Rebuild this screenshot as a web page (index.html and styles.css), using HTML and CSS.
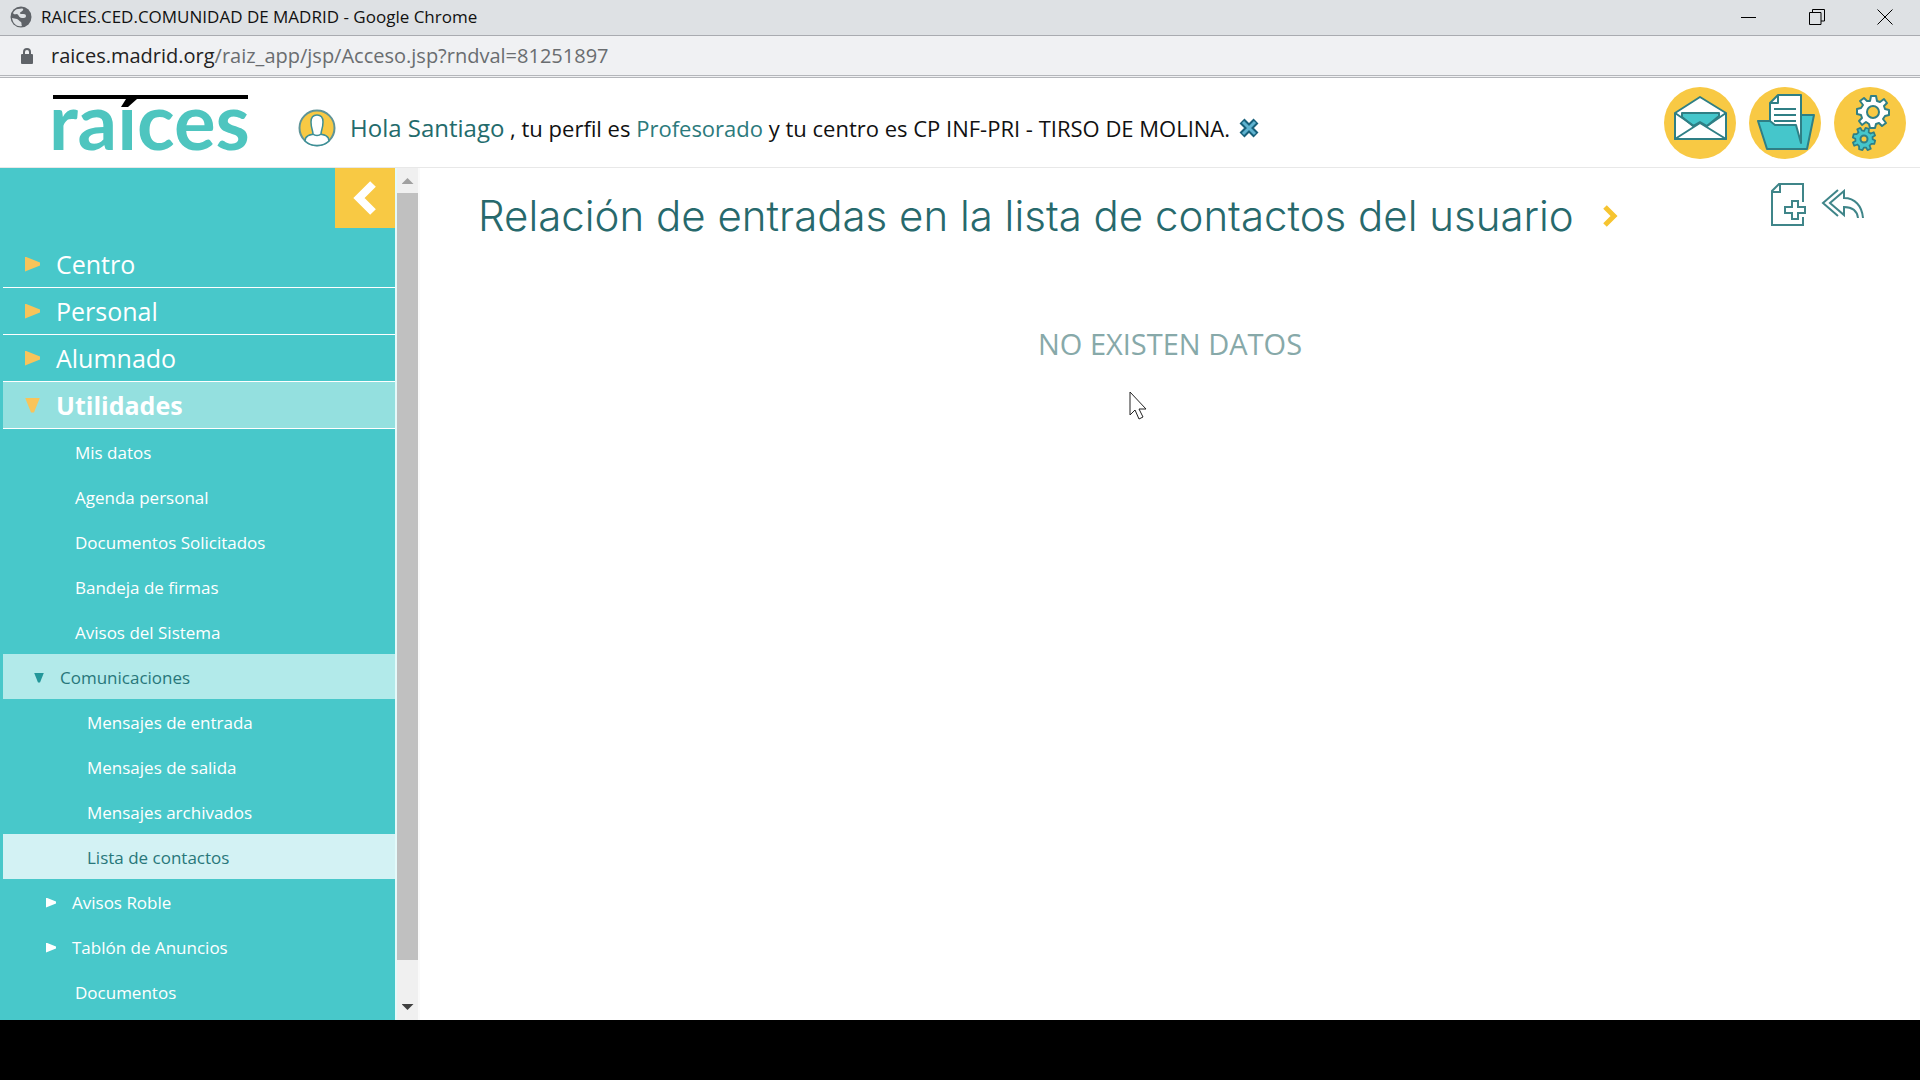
FILE: index.html
```html
<!DOCTYPE html>
<html lang="es">
<head>
    <meta charset="UTF-8">
    <meta name="viewport" content="width=device-width, initial-scale=1.0">
    <title>RAICES.CED.COMUNIDAD DE MADRID</title>
    <link rel="stylesheet" href="styles.css">
</head>
<body>
    <div class="titlebar">
        <svg class="globe" width="22" height="22" viewBox="0 0 22 22">
            <circle cx="11" cy="11" r="10.5" fill="#5f6368"/>
            <path d="M3 7c1-2 3-4 5-4 2 0 4-1 5 0 1 1-1 2-2 3-2 1-1 2 1 2 2 0 4 0 4 2s-2 2-4 2c-3 0-3-3-5-4-2 0-3 1-4-1zM2 12l5 1c2 1 2 2 4 3 1 1 0 3 1 4-5 1-9-2-10-8z" fill="#dee1e4"/>
        </svg>
        <span class="window-title">RAICES.CED.COMUNIDAD DE MADRID - Google Chrome</span>
        <div class="window-buttons">
            <button aria-label="Minimizar"><svg width="16" height="16" viewBox="0 0 16 16"><path d="M0 8.500h15"/></svg></button>
            <button aria-label="Restaurar"><svg width="16" height="16" viewBox="0 0 16 16"><path d="M.5 3.500h11.500v12h-11.500zM3.500 3.500v-3h12v11.500h-3.500"/></svg></button>
            <button aria-label="Cerrar"><svg width="16" height="16" viewBox="0 0 16 16"><path d="M.5 .5l15 15M15.500 .5l-15 15"/></svg></button>
        </div>
    </div>

    <div class="addressbar">
        <svg width="12" height="16" viewBox="0 0 12 16">
            <path d="M3 7V4a3 3 0 0 1 6 0v3" fill="none" stroke="#5f6368" stroke-width="2"/>
            <rect x="0" y="6" width="12" height="10" rx="1" fill="#5f6368"/>
        </svg>
        <span class="url"><b>raices.madrid.org</b>/raiz_app/jsp/Acceso.jsp?rndval=81251897</span>
    </div>

    <header class="header">
        <div class="logo">
            <span class="logo-text">raıces</span>
            <svg class="accent" width="16" height="8" viewBox="0 0 16 8"><path d="M5 0h11L7 8H0z"/></svg>
        </div>
        <div class="profile">
            <svg class="user" width="38" height="38" viewBox="0 0 38 38">
                <circle cx="19" cy="19" r="17.500" fill="#f8c944" stroke="#5f9497" stroke-width="2"/>
                <path d="M7 32c0-5 5-7 12-7s12 2 12 7c-3 3-7 4.500-12 4.500S10 35 7 32z" fill="#fff" stroke="#3d8f96" stroke-width="1.500"/>
                <path d="M15 25c0-3-2-6-2-12 0-5 2-7 6-7s6 2 6 7c0 6-2 9-2 12-2 2-6 2-8 0z" fill="#fff" stroke="#3d8f96" stroke-width="1.500"/>
            </svg>
            <p class="greeting"><span class="hello">Hola Santiago</span> , tu perfil es <a href="#">Profesorado</a> y tu centro es CP INF-PRI - TIRSO DE MOLINA.</p>
            <button class="exit" aria-label="Salir">
                <svg width="22" height="22" viewBox="0 0 22 22"><path d="M4 4l14 14M18 4L4 18" stroke="#17607a" stroke-width="7"/><path d="M5 5l12 12M17 5L5 17" stroke="#5fb3d0" stroke-width="3"/></svg>
            </button>
        </div>
        <nav class="shortcuts">
            <a href="#" aria-label="Mensajes">
                <svg width="72" height="72" viewBox="0 0 72 72">
                    <circle cx="36" cy="36" r="36" fill="#f8c944"/>
                    <g stroke="#2f7f85" stroke-width="2" stroke-linejoin="round">
                        <path d="M11 26L36 10l26 16v26H11z" fill="#fff"/>
                        <path d="M18 26h37v3L43 39l-7-4-7 4-11-9z" fill="#45c6cb"/>
                        <path d="M11 52l25-16 26 16z" fill="#fff"/>
                        <path d="M11 26l19 13M62 26L43 39" fill="none"/>
                    </g>
                </svg>
            </a>
            <a href="#" aria-label="Documentos">
                <svg width="72" height="72" viewBox="0 0 72 72">
                    <circle cx="36" cy="36" r="36" fill="#f8c944"/>
                    <g stroke="#2f7f85" stroke-width="2" stroke-linejoin="round">
                        <path d="M52 28h13l-7 34H18L9 34h13z" fill="#45c6cb"/>
                        <path d="M29 8h23v48l-5-18H26l-5-4V16z" fill="#fff"/>
                        <path d="M29 8v8h-8M25 22h22M25 28h22M25 34h22" fill="none"/>
                    </g>
                </svg>
            </a>
            <a href="#" aria-label="Configuración">
                <svg width="72" height="72" viewBox="0 0 72 72">
                    <circle cx="36" cy="36" r="36" fill="#f8c944"/>
                    <path transform="translate(39 25)" d="M-3-11L-2-16H3L4-11 7-10 11-13 14-9 11-6 12-3 16-2V3L12 4 10 7 13 11 9 14 6 11 3 12 2 16H-3L-4 12-7 10-11 13-14 9-11 6-12 3-16 2V-3L-12-4-10-7-13-11-9-14-6-11z" fill="#fff" stroke="#2f7f85" stroke-width="2" stroke-linejoin="round"/>
                    <circle cx="39" cy="25" r="6" fill="#f8c944" stroke="#2f7f85" stroke-width="2"/>
                    <path transform="translate(30 52) rotate(15) scale(.7)" d="M-3-11L-2-16H3L4-11 7-10 11-13 14-9 11-6 12-3 16-2V3L12 4 10 7 13 11 9 14 6 11 3 12 2 16H-3L-4 12-7 10-11 13-14 9-11 6-12 3-16 2V-3L-12-4-10-7-13-11-9-14-6-11z" fill="#45c6cb" stroke="#2f7f85" stroke-width="2.500" stroke-linejoin="round"/>
                    <circle cx="30" cy="52" r="3.500" fill="#f8c944" stroke="#2f7f85" stroke-width="2"/>
                </svg>
            </a>
        </nav>
    </header>

    <div class="main">
        <aside class="sidebar">
            <button class="collapse" aria-label="Ocultar menú">
                <svg width="24" height="36" viewBox="0 0 24 36"><path d="M20 4L6 18l14 14" fill="none" stroke="#fff" stroke-width="8"/></svg>
            </button>
            <ul class="menu">
                <li><a href="#" class="top"><i class="arrow right"></i>Centro</a></li>
                <li><a href="#" class="top"><i class="arrow right"></i>Personal</a></li>
                <li><a href="#" class="top"><i class="arrow right"></i>Alumnado</a></li>
                <li><a href="#" class="top open"><i class="arrow down"></i>Utilidades</a></li>
            </ul>
            <ul class="submenu">
                <li><a href="#">Mis datos</a></li>
                <li><a href="#">Agenda personal</a></li>
                <li><a href="#">Documentos Solicitados</a></li>
                <li><a href="#">Bandeja de firmas</a></li>
                <li><a href="#">Avisos del Sistema</a></li>
                <li><a href="#" class="group open"><i class="arrow small down"></i>Comunicaciones</a></li>
                <li><a href="#" class="child">Mensajes de entrada</a></li>
                <li><a href="#" class="child">Mensajes de salida</a></li>
                <li><a href="#" class="child">Mensajes archivados</a></li>
                <li><a href="#" class="child selected">Lista de contactos</a></li>
                <li><a href="#" class="group"><i class="arrow small right"></i>Avisos Roble</a></li>
                <li><a href="#" class="group"><i class="arrow small right"></i>Tablón de Anuncios</a></li>
                <li><a href="#">Documentos</a></li>
            </ul>
        </aside>
        <div class="scrollbar">
            <i class="scroll-up"></i>
            <div class="thumb"></div>
            <i class="scroll-down"></i>
        </div>
        <main class="content">
            <div class="heading">
                <h1>Relación de entradas en la lista de contactos del usuario</h1>
                <svg class="chevron" width="16" height="24" viewBox="0 0 16 24"><path d="M3 3l9 9-9 9" fill="none" stroke="#f6c430" stroke-width="5"/></svg>
                <div class="tools">
                    <a href="#" aria-label="Nuevo"><svg width="36" height="44" viewBox="0 0 36 44"><path d="M32 19V1H8L1 8v34h31v-8M9 2v7H2M21 18h6v6h7v6h-7v6h-6v-6h-7v-6h7z"/></svg></a>
                    <a href="#" aria-label="Volver"><svg width="44" height="32" viewBox="0 0 44 32"><path d="M17 1L2 14l15 13M37 29c-1-8-6-11-14-11v8L9 14 23 2v7c11 0 18 8 19 20"/></svg></a>
                </div>
            </div>
            <p class="empty">NO EXISTEN DATOS</p>
            <svg class="cursor" width="18" height="29" viewBox="0 0 18 29"><path d="M1 1v23l5-5 4 9 4-2-4-8h7z" fill="#fff" stroke="#222"/></svg>
        </main>
    </div>
</body>
</html>
```
FILE: styles.css
```css
* {
    box-sizing: border-box;
}
body {
    font-family: "Open Sans", "Noto Sans", sans-serif;
    margin: 0;
    height: 100vh;
    display: flex;
    flex-direction: column;
    background-color: #fff;
    border-bottom: 60px solid #000;
    overflow: hidden;
}
a {
    text-decoration: none;
    color: inherit;
}
button {
    border: none;
    background: none;
    padding: 0;
    cursor: pointer;
}
svg {
    display: block;
    flex-shrink: 0;
}
p, h1, ul {
    margin: 0;
    padding: 0;
}
ul {
    list-style: none;
}

/* browser window */
.titlebar {
    height: 36px;
    flex-shrink: 0;
    background-color: #dee1e4;
    border-bottom: 1px solid #a9abb0;
    display: flex;
    align-items: center;
    padding: 0 27px 2px 10px;
    gap: 9px;
}
.window-title {
    font-size: 17px;
    color: #111;
}
.window-buttons {
    margin-left: auto;
    display: flex;
    gap: 52px;
}
.window-buttons svg {
    fill: none;
    stroke: #000;
}
.addressbar {
    height: 42px;
    flex-shrink: 0;
    background-color: #f0f1f3;
    border-bottom: 3px double #b4b6ba;
    display: flex;
    align-items: center;
    padding-left: 21px;
    gap: 18px;
}
.url {
    font-size: 20px;
    color: #6a6d70;
}
.url b {
    font-weight: normal;
    color: #222;
}

/* header */
.header {
    height: 90px;
    flex-shrink: 0;
    border-bottom: 1px solid #e8e8e8;
    display: flex;
    align-items: center;
    padding: 0 14px 0 53px;
}
.logo {
    position: relative;
    width: 195px;
    height: 56px;
    border-top: 4px solid #000;
    margin-right: 50px;
}
.logo-text {
    display: block;
    margin-left: -4px;
    font-family: Lato, sans-serif;
    font-weight: bold;
    font-size: 78px;
    line-height: 42px;
    color: #4ec5bf;
}
.accent {
    position: absolute;
    left: 68px;
    top: 0;
}
.profile {
    display: flex;
    align-items: center;
    padding-top: 10px;
}
.user {
    margin-right: 14px;
}
.greeting {
    font-size: 22px;
    line-height: 32px;
    color: #111;
}
.greeting a {
    color: #2c7a7c;
}
.hello {
    font-size: 24px;
    color: #236b6c;
}
.exit {
    margin-left: 8px;
}
.shortcuts {
    margin-left: auto;
    display: flex;
    gap: 13px;
}

/* side menu */
.main {
    flex: 1;
    min-height: 0;
    display: flex;
}
.sidebar {
    width: 395px;
    flex-shrink: 0;
    overflow: hidden;
    background-color: #48c8ca;
    color: #fff;
    display: flex;
    flex-direction: column;
    padding-left: 3px;
}
.collapse {
    align-self: flex-end;
    width: 60px;
    height: 60px;
    flex-shrink: 0;
    background-color: #f8c944;
    display: flex;
    align-items: center;
    justify-content: center;
    margin-bottom: 13px;
}
.top {
    display: flex;
    align-items: center;
    height: 47px;
    padding-left: 22px;
    font-size: 25px;
    border-bottom: 1px solid #fff;
}
.top.open {
    font-weight: bold;
    background-color: #94e0df;
}
.arrow {
    width: 15px;
    height: 15px;
    margin-right: 16px;
    background-color: #f8c45a;
}
.right {
    clip-path: polygon(0 0, 100% 40%, 100% 60%, 0 100%);
}
.down {
    clip-path: polygon(0 0, 100% 0, 60% 100%, 40% 100%);
}
.submenu a {
    display: flex;
    align-items: center;
    height: 45px;
    padding-top: 2px;
    padding-left: 72px;
    font-size: 17px;
}
.submenu .child {
    padding-left: 84px;
}
.submenu .group {
    padding-left: 43px;
}
.submenu .group.open {
    padding-left: 31px;
    background-color: #b2eaea;
    color: #28777a;
}
.submenu .selected {
    background-color: #d3f2f4;
    color: #28777a;
}
.arrow.small {
    width: 10px;
    height: 10px;
    background-color: #fff;
}
.open .arrow.small {
    background-color: #23979a;
}
.scrollbar {
    width: 25px;
    flex-shrink: 0;
    background-color: #f0f0f0;
    border-left: 2px solid #e4fafa;
    border-right: 2px solid #fafafa;
    display: flex;
    flex-direction: column;
    align-items: center;
    padding: 10px 0;
}
.scroll-up, .scroll-down {
    width: 12px;
    height: 6px;
    background-color: #a0a0a0;
    clip-path: polygon(50% 0, 100% 100%, 0 100%);
}
.scroll-down {
    background-color: #404040;
    clip-path: polygon(0 0, 100% 0, 50% 100%);
}
.thumb {
    width: 100%;
    flex: 1;
    margin: 9px 0 44px;
    background-color: #c0c0c0;
}

/* content */
.content {
    flex: 1;
    position: relative;
}
.heading {
    display: flex;
    align-items: center;
    padding: 15px 55px 0 58px;
}
h1 {
    font-family: Inter, sans-serif;
    font-weight: 300;
    font-size: 42px;
    line-height: 66px;
    color: #27696c;
    white-space: nowrap;
}
.chevron {
    margin-left: 28px;
}
.tools {
    margin-left: auto;
    align-self: flex-start;
    display: flex;
    align-items: center;
    gap: 14px;
}
.tools svg {
    fill: none;
    stroke: #3f8589;
    stroke-width: 2;
}
.empty {
    margin-top: 75px;
    text-align: center;
    font-size: 29px;
    line-height: 40px;
    color: #87a9a9;
}
.cursor {
    position: absolute;
    left: 709px;
    top: 223px;
}
```
